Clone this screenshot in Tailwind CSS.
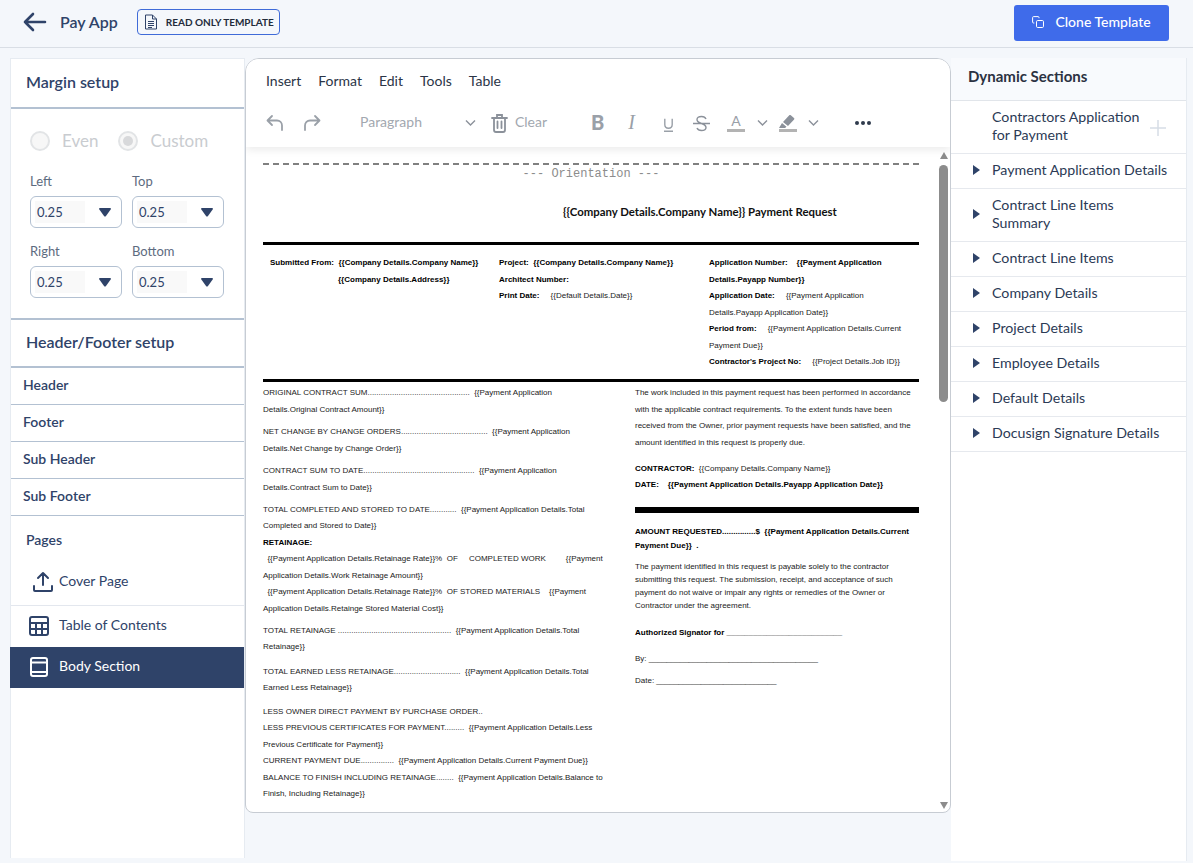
<!doctype html>
<html>
<head>
<meta charset="utf-8">
<script src="https://cdn.jsdelivr.net/npm/@tailwindcss/browser@4"></script>
</head>
<body class="m-0 h-[863px] w-[1193px] overflow-hidden bg-[#f4f7fb] font-['Lato',sans-serif] text-[#2f4369]">
<header class="flex h-[48px] items-center border-b border-[#d9dee5] pb-[3px] pl-[23px] pr-[24px]">
  <svg class="h-[20px] w-[24px]" viewBox="0 0 24 20" fill="none" stroke="#2f4369" stroke-width="2.6" stroke-linecap="round" stroke-linejoin="round"><path d="M22 10H2M10 2l-8 8 8 8"/></svg>
  <span class="ml-[13px] text-[16px] font-semibold">Pay App</span>
  <div class="ml-[19px] flex h-[26px] w-[143px] items-center rounded-[4px] border border-[#3f6bd8] pl-[6px]">
    <svg class="h-[16px] w-[14px]" viewBox="0 0 14 16" fill="none" stroke="#2f4369" stroke-width="1"><path d="M1.5 1h7l4 4v10h-11zM8.5 1v4h4M4 7.5h6M4 9.500h6M4 11.500h6M4 13.500h4"/></svg>
    <span class="ml-[8px] whitespace-nowrap text-[10px] font-bold text-[#222b3a]">READ ONLY TEMPLATE</span>
  </div>
  <button class="ml-auto mt-[2px] flex h-[36px] w-[155px] items-center justify-center gap-[11px] rounded-[3px] bg-[#3f6bea] pb-[3px] text-[14px] font-medium text-white">
    <svg class="h-[12px] w-[12px]" viewBox="0 0 12 12" fill="none" stroke="white" stroke-width="1"><rect x="4.5" y="4.5" width="7" height="7" rx="1.2"/><path d="M7 2.2V1.6A1 1 0 0 0 6 .6H1.6a1 1 0 0 0-1 1V6a1 1 0 0 0 1 1h.7"/></svg>
    Clone Template
  </button>
</header>

<main class="flex h-[815px] items-start pl-[10px] pt-[10px]">
  <aside class="h-[800px] w-[235px] shrink-0 border-x border-t border-[#e6ebf1] bg-white">
    <div class="flex h-[50px] items-center border-b-[2px] border-[#b3c1d2] pb-[2px] pl-[15px] text-[16px] font-semibold">Margin setup</div>
    <div class="flex items-center pl-[19px] pt-[22px] text-[17px] leading-[20px] text-[#c9ccd0]">
      <span class="h-[20px] w-[20px] rounded-full border-[2px] border-[#e2e4e6] bg-[#f7f7f7]"></span>
      <span class="ml-[12px]">Even</span>
      <span class="ml-[20px] flex h-[20px] w-[20px] items-center justify-center rounded-full border-[2px] border-[#e2e4e6] bg-[#f7f7f7]"><span class="h-[10px] w-[10px] rounded-full bg-[#d8d9db]"></span></span>
      <span class="ml-[12px]">Custom</span>
    </div>
    <div class="grid grid-cols-[92px_92px] gap-x-[10px] pl-[19px] pt-[20px] text-[13px] text-[#5d6b80]">
      <div><div class="leading-[20px]">Left</div>
        <div class="mt-[5px] flex h-[32px] items-center rounded-[6px] border border-[#b3c1d2] pl-[4px] text-[#2f4369]"><span class="flex h-[22px] w-[50px] items-center bg-[#f9f9f9] pl-[2px] pt-[2px]">0.25</span><svg class="ml-[14px] h-[9px] w-[12px]" viewBox="0 0 12 9" fill="#2f4369"><path d="M0 1q0-1 1-1h10q1 0 1 1L6.8 8.2q-.8.8-1.6 0z"/></svg></div></div>
      <div><div class="leading-[20px]">Top</div>
        <div class="mt-[5px] flex h-[32px] items-center rounded-[6px] border border-[#b3c1d2] pl-[4px] text-[#2f4369]"><span class="flex h-[22px] w-[50px] items-center bg-[#f9f9f9] pl-[2px] pt-[2px]">0.25</span><svg class="ml-[14px] h-[9px] w-[12px]" viewBox="0 0 12 9" fill="#2f4369"><path d="M0 1q0-1 1-1h10q1 0 1 1L6.8 8.2q-.8.8-1.6 0z"/></svg></div></div>
      <div class="mt-[13px]"><div class="leading-[20px]">Right</div>
        <div class="mt-[5px] flex h-[32px] items-center rounded-[6px] border border-[#b3c1d2] pl-[4px] text-[#2f4369]"><span class="flex h-[22px] w-[50px] items-center bg-[#f9f9f9] pl-[2px] pt-[2px]">0.25</span><svg class="ml-[14px] h-[9px] w-[12px]" viewBox="0 0 12 9" fill="#2f4369"><path d="M0 1q0-1 1-1h10q1 0 1 1L6.8 8.2q-.8.8-1.6 0z"/></svg></div></div>
      <div class="mt-[13px]"><div class="leading-[20px]">Bottom</div>
        <div class="mt-[5px] flex h-[32px] items-center rounded-[6px] border border-[#b3c1d2] pl-[4px] text-[#2f4369]"><span class="flex h-[22px] w-[50px] items-center bg-[#f9f9f9] pl-[2px] pt-[2px]">0.25</span><svg class="ml-[14px] h-[9px] w-[12px]" viewBox="0 0 12 9" fill="#2f4369"><path d="M0 1q0-1 1-1h10q1 0 1 1L6.8 8.2q-.8.8-1.6 0z"/></svg></div></div>
    </div>
    <div class="mt-[20px] flex h-[50px] items-center border-y-[2px] border-[#b3c1d2] pb-[2px] pl-[15px] text-[16px] font-semibold">Header/Footer setup</div>
    <div class="flex h-[37px] items-center border-b border-[#b3c1d2] pb-[3px] pl-[12px] text-[14px] font-semibold">Header</div>
    <div class="flex h-[37px] items-center border-b border-[#b3c1d2] pb-[3px] pl-[12px] text-[14px] font-semibold">Footer</div>
    <div class="flex h-[37px] items-center border-b border-[#b3c1d2] pb-[3px] pl-[12px] text-[14px] font-semibold">Sub Header</div>
    <div class="flex h-[37px] items-center border-b border-[#b3c1d2] pb-[3px] pl-[12px] text-[14px] font-semibold">Sub Footer</div>
    <div class="flex h-[42px] items-end pb-[8px] pl-[15px] text-[14px] font-semibold">Pages</div>
    <div class="flex h-[48px] items-center border-b border-[#e3e7ee] pl-[21px] text-[14px]">
      <svg class="h-[22px] w-[22px]" viewBox="0 0 22 22" fill="none" stroke="#2f4369" stroke-width="2" stroke-linecap="round" stroke-linejoin="round"><path d="M11 14V2M6 7l5-5 5 5M2 15v4q0 1 1 1h16q1 0 1-1v-4"/></svg>
      <span class="mb-[2px] ml-[5px]">Cover Page</span>
    </div>
    <div class="flex h-[41px] items-center pb-[1px] pl-[18px] text-[14px]">
      <svg class="h-[20px] w-[20px]" viewBox="0 0 20 20" fill="none" stroke="#2f4369" stroke-width="2"><rect x="1" y="1" width="18" height="18" rx="2"/><path d="M1 7h18M1 13h18M7 7v12M13 7v12"/></svg>
      <span class="mb-[3px] ml-[10px]">Table of Contents</span>
    </div>
    <div class="-ml-[1px] flex h-[41px] items-center bg-[#2f4369] pb-[1px] pl-[20px] text-[14px] text-white">
      <svg class="h-[20px] w-[18px]" viewBox="0 0 18 20" fill="none" stroke="white" stroke-width="2"><rect x="1" y="1" width="16" height="18" rx="2"/><path d="M2 5.5h14M2 15h14"/></svg>
      <span class="mb-[3px] ml-[11px]">Body Section</span>
    </div>
  </aside>

  <section class="relative h-[755px] w-[706px] shrink-0 overflow-hidden rounded-t-[14px] rounded-b-[8px] border border-[#c7ccd3] bg-white">
    <div class="relative z-10 h-[88px] bg-white shadow-[0_3px_8px_rgba(0,0,0,0.08)]">
      <div class="flex gap-[17px] pl-[20px] pt-[13px] text-[14px] leading-[17px] text-[#2b3547]">
        <span>Insert</span><span>Format</span><span>Edit</span><span>Tools</span><span>Table</span>
      </div>
      <div class="mt-[22px] flex h-[24px] items-center pl-[20px] text-[14px] text-[#a2a8b0]">
        <svg class="h-[18px] w-[18px]" viewBox="0 0 18 18" fill="none" stroke="#9aa0a8" stroke-width="1.8" stroke-linecap="round" stroke-linejoin="round"><path d="M6 2 1.500 6.500 6 11M2 6.500h9a5 5 0 0 1 5 5V16"/></svg>
        <svg class="ml-[19px] h-[18px] w-[18px]" viewBox="0 0 18 18" fill="none" stroke="#9aa0a8" stroke-width="1.8" stroke-linecap="round" stroke-linejoin="round"><path d="M12 2l4.500 4.500L12 11M16 6.500H7a5 5 0 0 0-5 5V16"/></svg>
        <span class="mb-[4px] ml-[39px]">Paragraph</span>
        <svg class="ml-[43px] h-[8px] w-[11px]" viewBox="0 0 11 8" fill="none" stroke="#8b919a" stroke-width="1.400"><path d="M1 1.500 5.500 6 10 1.500"/></svg>
        <svg class="ml-[15px] h-[20px] w-[17px]" viewBox="0 0 17 20" fill="none" stroke="#8b919a" stroke-width="1.800" stroke-linecap="round"><path d="M1 5h15M6 5V2h5v3M3 5v12q0 2 2 2h7q2 0 2-2V5M6.500 8.500V15M10.500 8.500V15"/></svg>
        <span class="mb-[4px] ml-[7px]">Clear</span>
        <span class="mb-[2px] ml-[44px] text-[20px] font-black leading-[24px] text-[#9aa0a8]">B</span>
        <span class="mb-[2px] ml-[24px] font-['Liberation_Serif'] text-[20px] italic leading-[24px] text-[#9aa0a8]">I</span>
        <svg class="ml-[28px] mt-[3px] h-[14px] w-[11px]" viewBox="0 0 13 17" fill="none" stroke="#9aa0a8" stroke-width="1.700"><path d="M2 1v7q0 4.500 4.500 4.500T11 8V1M1 16h11"/></svg>
        <svg class="ml-[19px] h-[17px] w-[17px]" viewBox="0 0 17 17" fill="none" stroke="#8b919a" stroke-width="1.400"><path d="M0 8.500h17M13 4q-1-2.500-4.500-2.500Q4 1.500 4 4.500 4 7 8.500 8.500q4.500 1.500 4.500 4 0 3-4.500 3Q5 15.500 4 13"/></svg>
        <span class="ml-[17px] flex h-[18px] w-[18px] flex-col items-center justify-between"><span class="text-[14px] leading-[14px] text-[#9aa0a8]">A</span><span class="h-[3px] w-[18px] bg-[#b3b3b3]"></span></span>
        <svg class="ml-[12px] h-[8px] w-[11px]" viewBox="0 0 11 8" fill="none" stroke="#8b919a" stroke-width="1.400"><path d="M1 1.500 5.500 6 10 1.500"/></svg>
        <span class="ml-[11px] flex h-[17px] w-[18px] flex-col justify-between"><svg class="h-[13px] w-[16px]" viewBox="0 0 16 13" fill="#8b919a"><path d="M10.500 0q.7-.3 1.300.3l3.200 2.800q.6.600.1 1.300L9 11 4 7zM3 8l4.500 3.800L6 13H0z"/></svg><span class="h-[3px] w-[18px] bg-[#b3b3b3]"></span></span>
        <svg class="ml-[11px] h-[8px] w-[11px]" viewBox="0 0 11 8" fill="none" stroke="#8b919a" stroke-width="1.400"><path d="M1 1.500 5.500 6 10 1.500"/></svg>
        <svg class="ml-[36px] h-[4px] w-[16px]" viewBox="0 0 16 4" fill="#2f3a4c"><circle cx="2" cy="2" r="2"/><circle cx="8" cy="2" r="2"/><circle cx="14" cy="2" r="2"/></svg>
      </div>
    </div>

    <div class="absolute right-[2px] top-[93px] flex h-[657px] w-[9px] flex-col items-center">
      <span class="h-0 w-0 border-x-[4.5px] border-b-[7px] border-x-transparent border-b-[#8c8c8c]"></span>
      <span class="mt-[6px] h-[237px] w-[9px] rounded-[5px] bg-[#8c8c8c]"></span>
      <span class="mt-auto h-0 w-0 border-x-[4.5px] border-t-[7px] border-x-transparent border-t-[#8c8c8c]"></span>
    </div>

    <div class="ml-[17px] w-[656px] font-['Liberation_Sans',sans-serif] text-[8px] leading-[16.5px] text-[#222]">
      <div class="mt-[16px] border-t-[2px] border-dashed border-[#808080]"></div>
      <div class="text-center font-['Liberation_Mono',monospace] text-[12px] leading-[18px] text-[#8c8c8c]">--- Orientation ---</div>
      <div class="mt-[22px] pl-[300px] font-['Lato',sans-serif] text-[11.4px] font-bold leading-[14px] text-[#111]">{{Company Details.Company Name}} Payment Request</div>

      <div class="mt-[23px] h-[3px] bg-black"></div>
      <div class="flex h-[134px] pt-[10px]">
        <div class="w-[236px] shrink-0 whitespace-nowrap pl-[7px] font-bold text-black">
          <div>Submitted From:&nbsp; {{Company Details.Company Name}}</div>
          <div class="pl-[68px]">{{Company Details.Address}}</div>
        </div>
        <div class="w-[210px] shrink-0 whitespace-nowrap">
          <div class="font-bold text-black">Project:&nbsp; {{Company Details.Company Name}}</div>
          <div class="font-bold text-black">Architect Number:</div>
          <div><b class="text-black">Print Date:</b>&nbsp; &nbsp; &nbsp;{{Default Details.Date}}</div>
        </div>
        <div class="whitespace-nowrap">
          <div class="font-bold text-black">Application Number:&nbsp; &nbsp; {{Payment Application</div>
          <div class="font-bold text-black">Details.Payapp Number}}</div>
          <div><b class="text-black">Application Date:</b>&nbsp; &nbsp; &nbsp;{{Payment Application</div>
          <div>Details.Payapp Application Date}}</div>
          <div><b class="text-black">Period from:</b>&nbsp; &nbsp; &nbsp;{{Payment Application Details.Current</div>
          <div>Payment Due}}</div>
          <div><b class="text-black">Contractor's Project No:</b>&nbsp; &nbsp; &nbsp;{{Project Details.Job ID}}</div>
        </div>
      </div>
      <div class="h-[3px] bg-black"></div>

      <div class="flex pt-[3px]">
        <div class="w-[372px] shrink-0 whitespace-nowrap">
          <div>ORIGINAL CONTRACT SUM..............................................&nbsp; {{Payment Application</div>
          <div>Details.Original Contract Amount}}</div>
          <div class="mt-[6px]">NET CHANGE BY CHANGE ORDERS.......................................&nbsp; {{Payment Application</div>
          <div>Details.Net Change by Change Order}}</div>
          <div class="mt-[6px]">CONTRACT SUM TO DATE..................................................&nbsp; {{Payment Application</div>
          <div>Details.Contract Sum to Date}}</div>
          <div class="mt-[5.5px]">TOTAL COMPLETED AND STORED TO DATE............&nbsp; {{Payment Application Details.Total</div>
          <div>Completed and Stored to Date}}</div>
          <div class="font-bold text-black">RETAINAGE:</div>
          <div>&nbsp; {{Payment Application Details.Retainage Rate}}%&nbsp; OF&nbsp; &nbsp; &nbsp;COMPLETED WORK&nbsp; &nbsp; &nbsp; &nbsp; &nbsp;{{Payment</div>
          <div>Application Details.Work Retainage Amount}}</div>
          <div>&nbsp; {{Payment Application Details.Retainage Rate}}%&nbsp; OF STORED MATERIALS&nbsp; &nbsp; {{Payment</div>
          <div>Application Details.Retainge Stored Material Cost}}</div>
          <div class="mt-[5.5px]">TOTAL RETAINAGE ...................................................&nbsp; {{Payment Application Details.Total</div>
          <div>Retainage}}</div>
          <div class="mt-[8px]">TOTAL EARNED LESS RETAINAGE..............................&nbsp; {{Payment Application Details.Total</div>
          <div>Earned Less Retainage}}</div>
          <div class="mt-[7px]">LESS OWNER DIRECT PAYMENT BY PURCHASE ORDER..</div>
          <div>LESS PREVIOUS CERTIFICATES FOR PAYMENT.........&nbsp; {{Payment Application Details.Less</div>
          <div>Previous Certificate for Payment}}</div>
          <div>CURRENT PAYMENT DUE...............&nbsp; {{Payment Application Details.Current Payment Due}}</div>
          <div>BALANCE TO FINISH INCLUDING RETAINAGE........&nbsp; {{Payment Application Details.Balance to</div>
          <div>Finish, Including Retainage}}</div>
          <div class="mt-[10px] h-[2px] w-[255px] bg-black"></div>
        </div>
        <div class="whitespace-nowrap">
          <div>The work included in this payment request has been performed in accordance</div>
          <div>with the applicable contract requirements. To the extent funds have been</div>
          <div>received from the Owner, prior payment requests have been satisfied, and the</div>
          <div>amount identified in this request is properly due.</div>
          <div class="mt-[9.5px]"><b class="text-black">CONTRACTOR:</b>&nbsp; {{Company Details.Company Name}}</div>
          <div class="font-bold text-black">DATE:&nbsp; &nbsp; {{Payment Application Details.Payapp Application Date}}</div>
          <div class="mt-[13.5px] h-[6px] w-[284px] bg-black"></div>
          <div class="mt-[11px] font-bold text-black">AMOUNT REQUESTED...............$&nbsp; {{Payment Application Details.Current</div>
          <div class="-mt-[2.5px] font-bold text-black">Payment Due}}&nbsp; .</div>
          <div class="mt-[5px] leading-[13px]">The payment identified in this request is payable solely to the contractor</div>
          <div class="leading-[13px]">submitting this request. The submission, receipt, and acceptance of such</div>
          <div class="leading-[13px]">payment do not waive or impair any rights or remedies of the Owner or</div>
          <div class="leading-[13px]">Contractor under the agreement.</div>
          <div class="mt-[13px] font-bold text-black">Authorized Signator for __________________________</div>
          <div class="mt-[9.5px]">By: ______________________________________</div>
          <div class="mt-[5.5px]">Date: ___________________________</div>
        </div>
      </div>
    </div>
  </section>

  <aside class="h-[803px] w-[236px] shrink-0 border-r border-[#e6ebf1] bg-white text-[14.2px] leading-[18px] text-[#2b3a55]">
    <div class="flex h-[43px] items-center border-b border-[#e1e5ea] bg-[#f8fafd] pb-[7px] pl-[17px] text-[15px] font-bold text-[#2b3242]">Dynamic Sections</div>
    <div class="relative flex h-[53px] items-center border-b border-[#e6e9ee] pb-[2px] pl-[41px]">
      <span>Contractors Application<br>for Payment</span>
      <svg class="absolute right-[20px] top-[19px] h-[16px] w-[16px]" viewBox="0 0 16 16" stroke="#d6dde6" stroke-width="1.500"><path d="M8 0v16M0 8h16"/></svg>
    </div>
    <div class="flex h-[35px] items-center border-b border-[#e6e9ee] pb-[3px] pl-[22px]"><span class="h-0 w-0 border-y-[5px] border-l-[7px] border-y-transparent border-l-[#2f4369]"></span><span class="ml-[12px] whitespace-nowrap">Payment Application Details</span></div>
    <div class="flex h-[53px] items-center border-b border-[#e6e9ee] pb-[3px] pl-[22px]"><span class="h-0 w-0 border-y-[5px] border-l-[7px] border-y-transparent border-l-[#2f4369]"></span><span class="ml-[12px]">Contract Line Items<br>Summary</span></div>
    <div class="flex h-[35px] items-center border-b border-[#e6e9ee] pb-[3px] pl-[22px]"><span class="h-0 w-0 border-y-[5px] border-l-[7px] border-y-transparent border-l-[#2f4369]"></span><span class="ml-[12px]">Contract Line Items</span></div>
    <div class="flex h-[35px] items-center border-b border-[#e6e9ee] pb-[3px] pl-[22px]"><span class="h-0 w-0 border-y-[5px] border-l-[7px] border-y-transparent border-l-[#2f4369]"></span><span class="ml-[12px]">Company Details</span></div>
    <div class="flex h-[35px] items-center border-b border-[#e6e9ee] pb-[3px] pl-[22px]"><span class="h-0 w-0 border-y-[5px] border-l-[7px] border-y-transparent border-l-[#2f4369]"></span><span class="ml-[12px]">Project Details</span></div>
    <div class="flex h-[35px] items-center border-b border-[#e6e9ee] pb-[3px] pl-[22px]"><span class="h-0 w-0 border-y-[5px] border-l-[7px] border-y-transparent border-l-[#2f4369]"></span><span class="ml-[12px]">Employee Details</span></div>
    <div class="flex h-[35px] items-center border-b border-[#e6e9ee] pb-[3px] pl-[22px]"><span class="h-0 w-0 border-y-[5px] border-l-[7px] border-y-transparent border-l-[#2f4369]"></span><span class="ml-[12px]">Default Details</span></div>
    <div class="flex h-[35px] items-center border-b border-[#e6e9ee] pb-[3px] pl-[22px]"><span class="h-0 w-0 border-y-[5px] border-l-[7px] border-y-transparent border-l-[#2f4369]"></span><span class="ml-[12px]">Docusign Signature Details</span></div>
  </aside>
</main>
</body>
</html>
